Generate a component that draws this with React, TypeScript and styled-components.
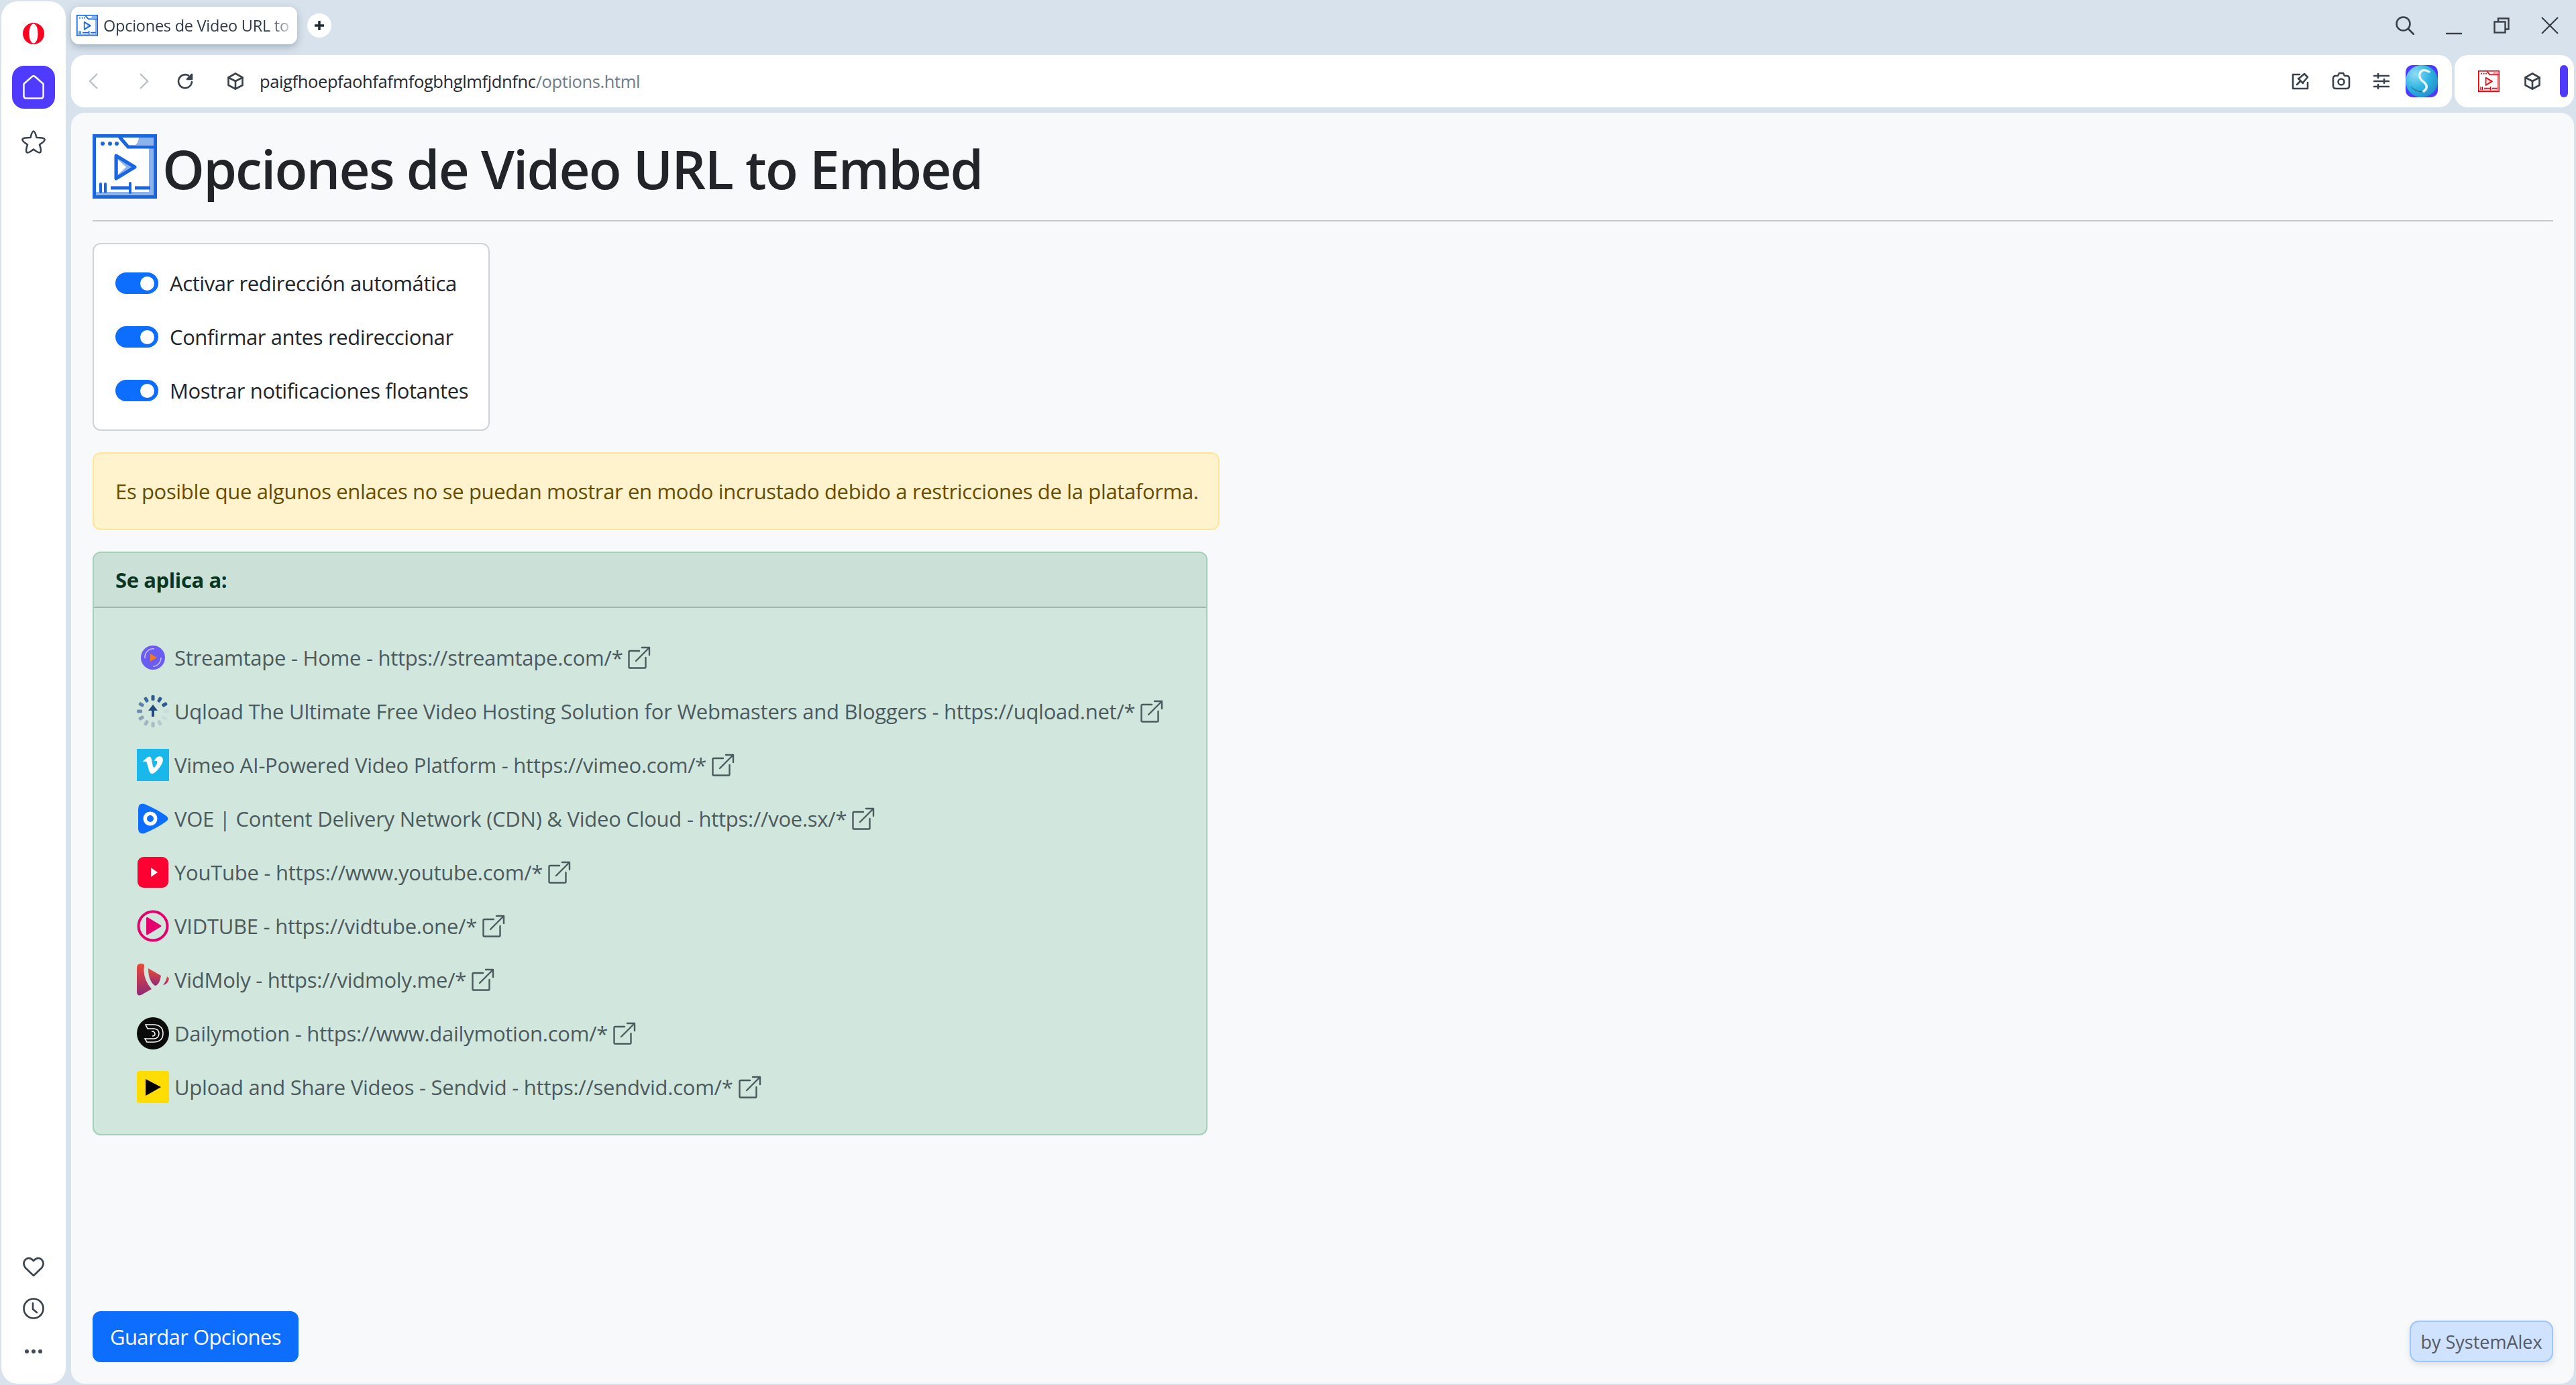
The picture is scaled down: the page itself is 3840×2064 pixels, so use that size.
import React from "react";
import styled, { createGlobalStyle } from "styled-components";
import { FaVimeoV } from "react-icons/fa";

const FONT = `"Open Sans", "Noto Sans", sans-serif`;

const Global = createGlobalStyle`
  html, body { margin: 0; padding: 0; background: #d8e2ec; }
  * { box-sizing: border-box; }
  body { font-family: ${FONT}; color: #212529; }
`;

const Shell = styled.div`
  width: 3840px;
  height: 2064px;
  display: flex;
  gap: 8px;
  padding: 2px 3px 2px 2px;
  background: #d8e2ec;
  overflow: hidden;
`;

const Sidebar = styled.aside`
  width: 96px;
  flex: none;
  background: #fff;
  border-radius: 24px;
  display: flex;
  flex-direction: column;
  align-items: center;
  justify-content: space-between;
  padding: 32px 0 44px;
`;

const SideGroup = styled.div<{ $gap: number }>`
  display: flex;
  flex-direction: column;
  align-items: center;
  gap: ${(p) => p.$gap}px;
`;

const Dots = styled.svg`
  margin-top: 14px;
`;

const HomeButton = styled.div`
  width: 64px;
  height: 64px;
  border-radius: 18px;
  background: #4f3bff;
  display: flex;
  align-items: center;
  justify-content: center;
`;

const Main = styled.div`
  flex: 1;
  min-width: 0;
  display: flex;
  flex-direction: column;
`;

const TabRow = styled.div`
  height: 80px;
  flex: none;
  padding-top: 8px;
  display: flex;
  align-items: flex-start;
`;

const Tab = styled.div`
  width: 337px;
  height: 56px;
  background: #fff;
  border-radius: 12px;
  box-shadow: 0 4px 12px rgba(60, 80, 100, 0.35);
  display: flex;
  align-items: center;
  padding-left: 8px;
  gap: 8px;
  overflow: hidden;
`;

const TabTitle = styled.span`
  font-size: 23.5px;
  letter-spacing: -0.25px;
  line-height: 32px;
  white-space: nowrap;
  color: #2e3a46;
  -webkit-mask-image: linear-gradient(90deg, #000 90%, rgba(0, 0, 0, 0.25) 100%);
  mask-image: linear-gradient(90deg, #000 90%, rgba(0, 0, 0, 0.25) 100%);
`;

const NewTab = styled.div`
  width: 36px;
  height: 36px;
  margin: 10px 0 0 15px;
  border-radius: 50%;
  background: #fff;
  display: flex;
  align-items: center;
  justify-content: center;
`;

const WindowControls = styled.div`
  margin-left: auto;
  height: 56px;
  display: flex;
  align-items: center;
  padding-right: 23px;
  gap: 47px;
`;

const ToolRow = styled.div`
  height: 78px;
  flex: none;
  display: flex;
  gap: 4px;
`;

const AddressBar = styled.div`
  flex: 1;
  background: #fff;
  border-radius: 20px;
  display: flex;
  align-items: center;
  padding: 0 21px 0 26px;
`;

const NavIcons = styled.div`
  display: flex;
  align-items: center;
  gap: 62px;
  & > svg:nth-child(2) { margin-right: -20px; }
  & > svg:nth-child(3) { margin-right: -12px; }
`;

const Url = styled.div`
  margin-left: 23px;
  font-size: 25.5px;
  letter-spacing: -0.38px;
  line-height: 32px;
  color: #1f2a35;
  white-space: nowrap;
`;

const UrlPath = styled.span`
  color: #6b7c8c;
`;

const ToolIcons = styled.div`
  margin-left: auto;
  display: flex;
  align-items: center;
  gap: 34px;
  & > svg:last-child { margin-left: -10px; }
`;

const ExtBar = styled.div`
  width: 178px;
  flex: none;
  background: #fff;
  border-radius: 20px;
  display: flex;
  align-items: center;
  padding-left: 35px;
  gap: 36px;
`;

const Pill = styled.div`
  width: 12px;
  height: 48px;
  border-radius: 6px;
  background: #4f3bff;
  margin-left: -8px;
`;

const Page = styled.main`
  flex: 1;
  margin-top: 8px;
  min-height: 0;
  background: #f8f9fa;
  border-radius: 20px;
  padding: 32px 31px 32px 32px;
  display: flex;
  flex-direction: column;
`;

const Heading = styled.header`
  display: flex;
  align-items: flex-start;
  gap: 8px;
  height: 130px;
  border-bottom: 2px solid #c5c7c9;
  flex: none;
`;

const Title = styled.h1`
  margin: 0;
  font-size: 80px;
  line-height: 102px;
  font-weight: 600;
  letter-spacing: -1.83px;
  color: #212529;
  white-space: nowrap;
`;

const OptionsBox = styled.section`
  align-self: flex-start;
  width: 592px;
  margin-top: 32px;
  background: #fff;
  border: 2px solid #d0d2d4;
  border-radius: 12px;
  padding: 18px 32px;
  display: flex;
  flex-direction: column;
`;

const OptionRow = styled.label`
  height: 80px;
  display: flex;
  align-items: center;
  gap: 17px;
  font-size: 31px;
  letter-spacing: -0.4px;
  white-space: nowrap;
`;

const Switch = styled.span`
  width: 64px;
  height: 32px;
  flex: none;
  border-radius: 16px;
  background: #0d6efd;
  display: flex;
  align-items: center;
  justify-content: flex-end;
  padding-right: 6px;
  &::after {
    content: "";
    width: 21px;
    height: 21px;
    border-radius: 50%;
    background: #fff;
  }
`;

const Alert = styled.div`
  align-self: flex-start;
  width: 1680px;
  margin-top: 32px;
  background: #fff3cd;
  border: 2px solid #ffe69c;
  border-radius: 12px;
  padding: 32px;
  font-size: 31px;
  letter-spacing: -0.35px;
  line-height: 48px;
  color: #664d03;
  white-space: nowrap;
`;

const Card = styled.section`
  align-self: flex-start;
  width: 1662px;
  height: 870px;
  margin-top: 32px;
  background: #d1e7dd;
  border: 2px solid #a3cfbb;
  border-radius: 12px;
  overflow: hidden;
`;

const CardHeader = styled.div`
  height: 82px;
  padding: 0 32px;
  display: flex;
  align-items: center;
  background: #cbe0d6;
  border-bottom: 2px solid #a3b5ac;
  font-size: 31px;
  letter-spacing: -0.4px;
  font-weight: 700;
  color: #0a3622;
`;

const SiteList = styled.ul`
  list-style: none;
  margin: 0;
  padding: 34px 0 0 64px;
`;

const SiteRow = styled.li`
  height: 80px;
  display: flex;
  align-items: center;
  gap: 8px;
  font-size: 31px;
  letter-spacing: -0.25px;
  color: #4c5a5d;
  white-space: nowrap;
`;

const Footer = styled.footer`
  margin-top: auto;
  display: flex;
  align-items: flex-end;
  justify-content: space-between;
`;

const SaveButton = styled.button`
  height: 76px;
  width: 307px;
  padding: 0;
  border: 0;
  border-radius: 12px;
  background: #0d6efd;
  color: #fff;
  font-family: ${FONT};
  font-size: 31px;
  letter-spacing: -0.55px;
`;

const Credit = styled.div`
  width: 214px;
  height: 62px;
  border: 2px solid #9ec5fe;
  border-radius: 14px;
  background: #cfe2ff;
  box-shadow: 0 4px 10px rgba(0, 0, 0, 0.1);
  display: flex;
  align-items: center;
  justify-content: center;
  font-size: 27px;
  color: #535a63;
  white-space: nowrap;
`;

const Tile = styled.span<{ $bg: string; $radius: number }>`
  width: 48px;
  height: 48px;
  flex: none;
  display: flex;
  align-items: center;
  justify-content: center;
  background: ${(p) => p.$bg};
  border-radius: ${(p) => p.$radius}px;
  color: #fff;
  font-size: 34px;
`;

const Line = ({ size, h, children }: { size: number; h?: number; children: React.ReactNode }) => (
  <svg width={size} height={h ?? size} viewBox={`0 0 ${size} ${h ?? size}`} fill="none" stroke="#39424b" strokeWidth="2.6" strokeLinecap="round" strokeLinejoin="round">
    {children}
  </svg>
);

const PlayWindow = ({ size, main, soft }: { size: number; main: string; soft: string }) => (
  <svg width={size} height={size} viewBox="0 0 96 96">
    <rect x="2.5" y="2.5" width="91" height="91" fill="#fff" stroke={main} strokeWidth="5" />
    <path d="M69 5H91V16H64Q68 13 69 5Z" fill={soft} />
    <rect x="84" y="20" width="7" height="71" fill={soft} />
    <rect x="5" y="86" width="86" height="5" fill={soft} />
    <path d="M40 4L53 19H92" fill="none" stroke={main} strokeWidth="5" />
    <circle cx="15" cy="14" r="3" fill={main} />
    <circle cx="26" cy="14" r="3" fill={main} />
    <circle cx="36" cy="14" r="3" fill={main} />
    <path d="M35 32L63 49L35 66Z" fill={soft} stroke={main} strokeWidth="5" strokeLinejoin="round" />
    <path d="M38 38V60L50 49Z" fill="#fff" />
    <path d="M12 74V86M19 74V86" stroke={main} strokeWidth="4" strokeLinecap="round" />
    <path d="M27 80H56M63 80H86" stroke={main} strokeWidth="5" />
    <path d="M56 73V87" stroke={main} strokeWidth="4" strokeLinecap="round" />
  </svg>
);

const OperaLogo = () => (
  <svg width="32" height="32" viewBox="0 0 32 32">
    <path fillRule="evenodd" fill="#ff0020" d="M16 0A16 16 0 1 0 16 32A16 16 0 1 0 16 0ZM16 1.5C20 1.5 22.5 8 22.5 16S20 30.500 16 30.500S9.500 24 9.500 16S12 1.500 16 1.500Z" />
  </svg>
);

const ExternalLink = () => (
  <svg width="34" height="34" viewBox="0 0 34 34" fill="none" stroke="#4c5a5d" strokeWidth="2.4" strokeLinecap="round" strokeLinejoin="round">
    <path d="M17 7H3Q1.500 7 1.500 8.500V31Q1.500 32.500 3 32.500H25Q26.500 32.500 26.500 31V17" />
    <path d="M12 22L32 2M21 2H32V13" />
  </svg>
);

const Streamtape = () => (
  <svg width="48" height="48" viewBox="0 0 48 48">
    <circle cx="24" cy="24" r="18" fill="#6a5cf0" />
    <path d="M12 25A12 13 0 0 1 26 11M36 24A12 13 0 0 1 24 37" fill="none" stroke="#c5bffa" strokeWidth="1.6" />
    <path d="M20 18L30 24L20 30Z" fill="#f47a1f" />
  </svg>
);

const Uqload = () => {
  const ticks = [
    ["#2e5a90", 0], ["#2e5a90", 30], ["#2e5a90", 60], ["#c9dcdc", 90], ["#c9dcdc", 120], ["#b6c9cf", 150],
    ["#a8bcc4", 180], ["#9fb5bf", 210], ["#8aa4b4", 240], ["#6f8fae", 270], ["#5f84a8", 300], ["#3d6a9a", 330],
  ] as const;
  return (
    <svg width="48" height="48" viewBox="0 0 48 48">
      {ticks.map(([c, a]) => (
        <rect key={a} x="21.500" y="0" width="5" height="8" rx="1.500" fill={c} transform={`rotate(${a} 24 24)`} />
      ))}
      <path d="M24 14L31 23H26V32H22V23H17Z" fill="#234a7c" />
    </svg>
  );
};

const Voe = () => (
  <svg width="48" height="48" viewBox="0 0 48 48">
    <path d="M2 10Q2 0 11 2Q30 10 44 20Q49 24 44 28Q30 38 11 46Q2 48 2 38Z" fill="#0d6efd" />
    <circle cx="20" cy="24" r="10.500" fill="#fff" />
    <circle cx="20" cy="24" r="5" fill="#0d6efd" />
  </svg>
);

const YouTube = () => (
  <svg width="48" height="48" viewBox="0 0 48 48">
    <rect x="1" y="1" width="46" height="46" rx="9" fill="#ff0033" />
    <path d="M21 17L31 24L21 31Z" fill="#fff" />
  </svg>
);

const VidTube = () => (
  <svg width="48" height="48" viewBox="0 0 48 48">
    <circle cx="24" cy="24" r="21.500" fill="none" stroke="#e6006d" strokeWidth="4" />
    <path d="M16 11Q14 10 14 13V35Q14 38 16 37L36 25Q37 24 36 23Z" fill="#e6006d" />
  </svg>
);

const VidMoly = () => (
  <svg width="48" height="48" viewBox="0 0 48 48">
    <defs>
      <linearGradient id="vm" x1="0" y1="0" x2="0" y2="1">
        <stop offset="0" stopColor="#ea4b36" />
        <stop offset="1" stopColor="#8e2a78" />
      </linearGradient>
    </defs>
    <path d="M0 6Q0 0 6 0Q12 0 11 4Q8 22 22 38L6 47Q0 49 0 42Z" fill="url(#vm)" />
    <path d="M17 7L36 18Q34 32 27 33Q17 26 17 7Z" fill="url(#vm)" />
    <path d="M48 22Q47 30 39 32Q44 26 45 19Z" fill="url(#vm)" />
  </svg>
);

const Dailymotion = () => (
  <svg width="48" height="48" viewBox="0 0 48 48">
    <circle cx="24" cy="24" r="24" fill="#0b0b0b" />
    <path d="M13 11H26Q39 12 39 24Q39 36 26 37H15L12 32H26Q33 31 33 24Q33 18 26 17H16Z" fill="none" stroke="#fff" strokeWidth="1.500" />
    <path d="M22 21Q27 21 27 25Q27 28 23 28" fill="none" stroke="#fff" strokeWidth="1.500" />
  </svg>
);

const Sendvid = () => (
  <svg width="48" height="48" viewBox="0 0 48 48">
    <rect width="48" height="48" rx="4" fill="#ffdd00" />
    <path d="M13 12L36 24L13 37Z" fill="#000" />
  </svg>
);

const SiteLogo = () => (
  <svg width="48" height="48" viewBox="0 0 48 48">
    <defs>
      <radialGradient id="ball" cx="0.3" cy="0.28" r="0.9">
        <stop offset="0" stopColor="#8fdcf4" />
        <stop offset="0.5" stopColor="#30b4e2" />
        <stop offset="1" stopColor="#1b86c4" />
      </radialGradient>
    </defs>
    <rect width="48" height="48" rx="10" fill="#4f3bff" />
    <ellipse cx="24" cy="24" rx="24" ry="24" fill="url(#ball)" />
    <path d="M35 10Q24 4 21 13Q19 20 28 26Q35 33 27 39" fill="none" stroke="#e8f2f6" strokeWidth="3.500" strokeLinecap="round" />
    <path d="M8 32Q12 38 24 40" fill="none" stroke="#33506a" strokeWidth="1" />
  </svg>
);

const sites: { logo: React.ReactNode; text: string }[] = [
  { logo: <Streamtape />, text: "Streamtape - Home - https://streamtape.com/*" },
  { logo: <Uqload />, text: "Uqload The Ultimate Free Video Hosting Solution for Webmasters and Bloggers - https://uqload.net/*" },
  { logo: <Tile $bg="#1ab7ea" $radius={0}><FaVimeoV /></Tile>, text: "Vimeo AI-Powered Video Platform - https://vimeo.com/*" },
  { logo: <Voe />, text: "VOE | Content Delivery Network (CDN) & Video Cloud - https://voe.sx/*" },
  { logo: <YouTube />, text: "YouTube - https://www.youtube.com/*" },
  { logo: <VidTube />, text: "VIDTUBE - https://vidtube.one/*" },
  { logo: <VidMoly />, text: "VidMoly - https://vidmoly.me/*" },
  { logo: <Dailymotion />, text: "Dailymotion - https://www.dailymotion.com/*" },
  { logo: <Sendvid />, text: "Upload and Share Videos - Sendvid - https://sendvid.com/*" },
];

const options = ["Activar redirección automática", "Confirmar antes redireccionar", "Mostrar notificaciones flotantes"];

export default function App() {
  return (
    <Shell>
      <Global />
      <Sidebar>
        <SideGroup $gap={32}>
          <OperaLogo />
          <HomeButton>
            <svg width="32" height="36" viewBox="0 0 32 36" fill="none" stroke="#fff" strokeWidth="2.400" strokeLinejoin="round">
              <path d="M1.500 13L14 2Q16 0.500 18 2L30.500 13V31Q30.500 34.500 27 34.500H5Q1.500 34.500 1.500 31Z" />
            </svg>
          </HomeButton>
          <Line size={36}>
            <path d="M13.500 11Q18 -8 22.500 11Q44.250 10.750 27 21.500Q33.500 41 18 28.500Q2.500 41 9 21.500Q-8.250 10.750 13.500 11Z" />
          </Line>
        </SideGroup>
        <SideGroup $gap={30}>
          <Line size={32}>
            <path d="M16 29L3.500 17Q-1 10 4 5Q10 0 16 7Q22 0 28 5Q33 10 28.500 17Z" />
          </Line>
          <Line size={32}>
            <circle cx="16" cy="16" r="14.500" />
            <path d="M15 8V17L21 22" />
          </Line>
          <Dots width="28" height="8" viewBox="0 0 28 8" fill="#434c55">
            <circle cx="4" cy="4" r="3" />
            <circle cx="14" cy="4" r="3" />
            <circle cx="24" cy="4" r="3" />
          </Dots>
        </SideGroup>
      </Sidebar>
      <Main>
        <TabRow>
          <Tab>
            <PlayWindow size={32} main="#1a66e0" soft="#8db3ec" />
            <TabTitle>Opciones de Video URL to</TabTitle>
          </Tab>
          <NewTab>
            <svg width="16" height="16" viewBox="0 0 16 16" stroke="#212b36" strokeWidth="3.500">
              <path d="M8 1V15M1 8H15" />
            </svg>
          </NewTab>
          <WindowControls>
            <Line size={28}>
              <circle cx="11.500" cy="11.500" r="10" />
              <path d="M19 19L27 27" />
            </Line>
            <svg width="24" height="30" viewBox="0 0 24 30" stroke="#3a3f44" strokeWidth="2.400">
              <path d="M0 27H24" />
            </svg>
            <svg width="24" height="24" viewBox="0 0 24 24" fill="none" stroke="#3a3f44" strokeWidth="2.400">
              <rect x="1.500" y="6.500" width="16" height="16" />
              <path d="M7 6.500V1.500H22.500V17.500H17.500" />
            </svg>
            <svg width="26" height="26" viewBox="0 0 26 26" stroke="#3a3f44" strokeWidth="2.200">
              <path d="M1 1L25 25M25 1L1 25" />
            </svg>
          </WindowControls>
        </TabRow>
        <ToolRow>
          <AddressBar>
            <NavIcons>
              <svg width="14" height="24" viewBox="0 0 14 24" fill="none" stroke="#bcc0c4" strokeWidth="2.400"><path d="M13 1L2 12L13 23" /></svg>
              <svg width="14" height="24" viewBox="0 0 14 24" fill="none" stroke="#bcc0c4" strokeWidth="2.400"><path d="M1 1L12 12L1 23" /></svg>
              <Line size={24}>
                <path d="M22 13A10 10 0 1 1 17 3.500" />
                <path d="M22 2V9H15Z" fill="#39424b" />
              </Line>
              <Line size={26}>
                <path d="M13 1.500L23.500 7.500V19L13 24.500L2.500 19V7.500Z" />
                <path d="M2.500 7.500L13 13L23.500 7.500M13 13V24.500" />
              </Line>
            </NavIcons>
            <Url>
              paigfhoepfaohfafmfogbhglmfjdnfnc<UrlPath>/options.html</UrlPath>
            </Url>
            <ToolIcons>
              <Line size={26}>
                <path d="M12 3H2V24H24V15" />
                <path d="M8 18L13 13M10 9L17 16M11 9L19 2L24 7L17 15" />
              </Line>
              <Line size={28}>
                <path d="M2 10Q2 6 6 6H9L11 2H17L19 6H22Q26 6 26 10V21Q26 25 22 25H6Q2 25 2 21Z" />
                <circle cx="14" cy="15" r="4.500" />
              </Line>
              <Line size={24}>
                <path d="M1 4H23M1 12H23M1 20H23" />
                <path d="M7 1V7M16 9V15M7 17V23" />
              </Line>
              <SiteLogo />
            </ToolIcons>
          </AddressBar>
          <ExtBar>
            <PlayWindow size={32} main="#e8000d" soft="#f6a3a3" />
            <Line size={26}>
              <path d="M13 1.500L23.500 7.500V19L13 24.500L2.500 19V7.500Z" />
              <path d="M2.500 7.500L13 13L23.500 7.500M13 13V24.500" />
            </Line>
            <Pill />
          </ExtBar>
        </ToolRow>
        <Page>
          <Heading>
            <PlayWindow size={96} main="#1a66e0" soft="#8db3ec" />
            <Title>Opciones de Video URL to Embed</Title>
          </Heading>
          <OptionsBox>
            {options.map((o) => (
              <OptionRow key={o}>
                <Switch />
                {o}
              </OptionRow>
            ))}
          </OptionsBox>
          <Alert>Es posible que algunos enlaces no se puedan mostrar en modo incrustado debido a restricciones de la plataforma.</Alert>
          <Card>
            <CardHeader>Se aplica a:</CardHeader>
            <SiteList>
              {sites.map((s) => (
                <SiteRow key={s.text}>
                  {s.logo}
                  <span>{s.text}</span>
                  <ExternalLink />
                </SiteRow>
              ))}
            </SiteList>
          </Card>
          <Footer>
            <SaveButton>Guardar Opciones</SaveButton>
            <Credit>by SystemAlex</Credit>
          </Footer>
        </Page>
      </Main>
    </Shell>
  );
}
